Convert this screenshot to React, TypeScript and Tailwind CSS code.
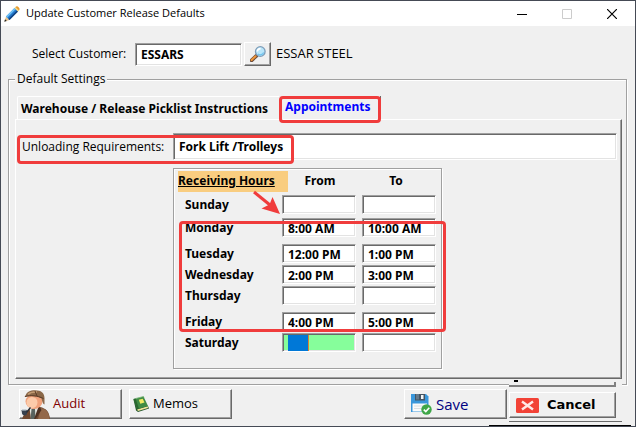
import { useState } from 'react'
import clsx from 'clsx'

const sunken =
  'border border-t-[#a0a0a0] border-l-[#a0a0a0] border-b-white border-r-white shadow-[inset_1px_1px_0_#696969,inset_-1px_-1px_0_#e3e3e3] outline-none'
const raised =
  'border border-t-white border-l-white border-b-[#696969] border-r-[#696969] shadow-[inset_-1px_-1px_0_#a0a0a0] bg-[#f0f0f0]'
const groupBox =
  'border border-[#a0a0a0] shadow-[inset_1px_1px_0_#ffffff,1px_1px_0_#ffffff]'
const bold = "font-['Noto_Sans',sans-serif] font-bold"
const callout = 'absolute pointer-events-none rounded-[4px] border-3 border-[#f03c3c]'

const hours = [
  { day: 'Sunday', from: '', to: '', row: 'h-[23px]' },
  { day: 'Monday', from: '8:00 AM', to: '10:00 AM', row: 'h-[26px]' },
  { day: 'Tuesday', from: '12:00 PM', to: '1:00 PM', row: 'h-[21px]' },
  { day: 'Wednesday', from: '2:00 PM', to: '3:00 PM', row: 'h-[21px]' },
  { day: 'Thursday', from: '', to: '', row: 'h-[26px]' },
  { day: 'Friday', from: '4:00 PM', to: '5:00 PM', row: 'h-[21px]' },
  { day: 'Saturday', from: '', to: '', row: 'h-[21px]' },
]

function PencilIcon() {
  return (
    <svg className="w-4 h-4" viewBox="0 0 16 16" aria-hidden="true">
      <path d="M0.5 15.5 2 10.5 5.5 14Z" fill="#e9c48c" />
      <path d="M0.3 15.7 1 13.2 2.8 15Z" fill="#222" />
      <path d="M2 10.5 10.5 2 14 5.5 5.5 14Z" fill="#2277cc" />
      <path d="M2 10.5 10.5 2 11.7 3.2 3.2 11.7Z" fill="#6cc0f5" />
      <path d="M4.4 12.9 12.9 4.4 14 5.5 5.5 14Z" fill="#12427f" />
      <path d="M10.5 2 11.4 1.1 14.9 4.6 14 5.5Z" fill="#f2d377" />
      <path d="M11.4 1.1C12.4 0 13.5 0 14.6 1.2 15.9 2.4 15.9 3.6 14.9 4.6Z" fill="#e69a2c" />
    </svg>
  )
}

function SearchIcon() {
  return (
    <svg className="w-4 h-4" viewBox="0 0 16 16" aria-hidden="true">
      <path d="M1.6 14.4 6.6 9.6" stroke="#6b4b3a" strokeWidth="3.6" strokeLinecap="round" />
      <path d="M1.6 14 5.6 10.2" stroke="#f0973a" strokeWidth="2" strokeLinecap="round" />
      <circle cx="10.3" cy="5.5" r="4.8" fill="#b9e6fa" stroke="#7d9cb8" strokeWidth="1.3" />
      <path d="M7.3 5.5C7.5 3.6 8.8 2.6 10.6 2.6" stroke="#fff" strokeWidth="1.6" fill="none" />
      <path d="M8 8.1C10 9.6 12.6 8.7 13.6 6.4" stroke="#6fc3ee" strokeWidth="1.2" fill="none" />
    </svg>
  )
}

function DetectiveIcon() {
  return (
    <svg className="w-[30px] h-[29px] shrink-0" viewBox="0 0 30 29" aria-hidden="true">
      {/* coat, shirt and tie */}
      <path d="M2 29C3 25 6 22 9 19L13 17H20C26 18.500 29 21 30 29Z" fill="#70482f" />
      <path d="M21 18C26 19 29 22 29.500 29H18Z" fill="#93684a" />
      <path d="M9.500 17.500 18 16.500 18.500 21 14 29H11Z" fill="#e6e8e2" />
      <path d="M11.500 19 15 18.500 15.500 29H10.500Z" fill="#59635f" />
      <path d="M19 16.500 21.500 20 15.500 29H14L17.500 19.500Z" fill="#4d3122" />
      {/* face */}
      <ellipse cx="14" cy="11.500" rx="8.500" ry="7.500" fill="#f0a27c" />
      <ellipse cx="12" cy="12.500" rx="5.500" ry="5.500" fill="#fccbaa" />
      {/* deerstalker */}
      <path d="M5.500 5.500C7 1.800 10 0.300 15 0.300 21 0.300 24.500 3 24.500 8V14.500C23 14.500 22.500 12 21.500 8.500 16 5.800 11 5.500 4.500 7Z" fill="#8a6748" />
      <path d="M8 4.500C10 2.300 13 1.700 17 2" stroke="#c39b72" strokeWidth="1.500" fill="none" />
      <path d="M15 1 17 6M5 6.500C11 5 17 5.500 23.500 8.500" stroke="#5a3b26" strokeWidth="1" fill="none" />
      {/* pipe */}
      <path d="M1.500 20H7V23.500C7 26 2.500 26 2 23.500Z" fill="#38424f" />
      <path d="M2 20H6.500" stroke="#b3bec8" strokeWidth="1.300" />
      <path d="M6.500 22.500 10.500 17.500" stroke="#28303a" strokeWidth="1.300" />
    </svg>
  )
}

function BookIcon() {
  return (
    <svg className="w-4 h-4 shrink-0" viewBox="0 0 16 16" aria-hidden="true">
      <path d="M0.500 3.500 3 14.500 5 16 16 12.500 15 10Z" fill="#24572b" />
      <path d="M4 13.500 14.800 10.200 15 12 5 15Z" fill="#f2e39b" />
      <path d="M0.500 3 10.500 0.500 15 10 4 13.300Z" fill="#3f8b43" />
      <path d="M0.500 3 2.600 2.500 6 12.700 4 13.300Z" fill="#2a672f" />
      <path d="M5.800 3.700 9.700 2.700 11.500 6.500 7.300 7.700Z" fill="#f2ea62" />
      <path d="M3 2.400 10.500 0.500 11 1.600" stroke="#80bb7c" strokeWidth="0.800" fill="none" />
    </svg>
  )
}

function SaveIcon() {
  return (
    <svg className="w-[22px] h-[22px] shrink-0" viewBox="0 0 22 22" aria-hidden="true">
      <path d="M1 1H16L18.500 3.500V19H1Z" fill="#3a97db" />
      <path d="M5 1H15V7.500H5Z" fill="#455463" />
      <path d="M6 1H9V6.500H6Z" fill="#64798a" />
      <path d="M11 2H13.500V6H11Z" fill="#f1f5f7" />
      <path d="M2.500 10.500H17V18.500H2.500Z" fill="#fafafa" />
      <path d="M4 13H15M4 15.500H12" stroke="#d2d8dc" strokeWidth="0.800" />
      <circle cx="16.500" cy="16.500" r="5.200" fill="#3fa648" />
      <path d="M13.800 16.600 15.800 18.600 19.300 14.800" stroke="#fff" strokeWidth="1.600" fill="none" />
    </svg>
  )
}

function CancelIcon() {
  return (
    <svg className="w-[23px] h-[15px] shrink-0" viewBox="0 0 23 15" aria-hidden="true">
      <rect width="23" height="15" rx="1.500" fill="#f24236" />
      <path d="M6 3.500 17 11.500M17 3.500 6 11.500" stroke="#ffe9e7" strokeWidth="2.400" />
    </svg>
  )
}

function TitleBar() {
  return (
    <header className="flex h-[25px] items-center bg-white pl-[3px] text-[11px]">
      <PencilIcon />
      <h1 className="ml-1.5 grow">Update Customer Release Defaults</h1>
      <button type="button" aria-label="Minimize" className="flex w-[45px] justify-center">
        <svg className="w-2.5 h-2.5" viewBox="0 0 10 10"><path d="M0 5.500H10" stroke="#000" /></svg>
      </button>
      <button type="button" aria-label="Maximize" disabled className="flex w-[45px] justify-center">
        <svg className="w-2.5 h-2.5" viewBox="0 0 10 10"><path d="M0.500 0.500H9.500V9.500H0.500Z" stroke="#ccc" fill="none" /></svg>
      </button>
      <button type="button" aria-label="Close" className="flex w-[46px] justify-center">
        <svg className="w-2.5 h-2.5" viewBox="0 0 10 10"><path d="M0 0 10 10M10 0 0 10" stroke="#000" strokeWidth="1.200" /></svg>
      </button>
    </header>
  )
}

function HoursTable() {
  const time = clsx(sunken, bold, 'block h-[19px] w-[74px] pt-0.5 pl-[5px]')

  return (
    <div className={clsx(groupBox, 'relative mt-2 ml-[157px] w-[269px] pt-0.5 pb-[14px] pl-1')}>
      <table className={clsx(bold, 'w-[264px] table-fixed border-collapse text-left')}>
        <thead>
          <tr className="h-6 align-top">
            <th className="w-[104px] p-0">
              <div className="h-[21px] w-[110px] bg-[#f9cd80] leading-[19px] underline">Receiving Hours</div>
            </th>
            <th className="w-20 p-0 pr-1 text-center leading-[19px]">From</th>
            <th className="w-20 p-0 pr-3 text-center leading-[19px]">To</th>
          </tr>
        </thead>
        <tbody>
          {hours.map(({ day, from, to, row }) => (
            <tr key={day} className={clsx(row, 'align-top')}>
              <th scope="row" className="p-0 pl-[7px] leading-[20px]">{day}</th>
              <td className="p-0">
                <div className="relative">
                  <input
                    aria-label={`${day} from`}
                    defaultValue={from}
                    className={clsx(time, day === 'Saturday' ? 'bg-[#86fe9b]' : 'bg-white')}
                  />
                  {/* active cell: selection block and caret */}
                  {day === 'Saturday' && (
                    <span className="absolute top-0.5 left-1.5 h-4 w-[21px] border-r border-[#e08030] bg-[#0078d7]" />
                  )}
                </div>
              </td>
              <td className="p-0">
                <input aria-label={`${day} to`} defaultValue={to} className={clsx(time, 'bg-white')} />
              </td>
            </tr>
          ))}
        </tbody>
      </table>

      <div className={clsx(callout, 'top-[52px] left-[5px] h-[111px] w-[267px]')} />
      <svg className="absolute top-[21px] left-[78px] h-7 w-8 pointer-events-none" viewBox="0 0 32 28" aria-hidden="true">
        <path d="M2 2 18 15" stroke="#f03c3c" strokeWidth="3" />
        <path d="M28 24 20.500 7 17.500 14.500 9.500 18.500Z" fill="#f03c3c" />
      </svg>
    </div>
  )
}

export default function App() {
  const [tab, setTab] = useState('appointments')

  return (
    <div className="relative min-h-screen w-full overflow-hidden border border-[#454a55] bg-[#f0f0f0] font-['Open_Sans','Noto_Sans',sans-serif] text-[12px] text-black">
      <TitleBar />

      <main>
        <div className="flex h-10 items-center pt-4 pl-[31px]">
          <label htmlFor="customer" className="w-[103px]">Select Customer:</label>
          <input
            id="customer"
            defaultValue="ESSARS"
            className={clsx(sunken, bold, 'h-[23px] w-[107px] bg-white pl-[5px]')}
          />
          <button type="button" aria-label="Find customer" className={clsx(raised, 'ml-0.5 flex h-6 w-[27px] items-center justify-center')}>
            <SearchIcon />
          </button>
          <span className="ml-[5px] text-[13px]">ESSAR STEEL</span>
        </div>

        <fieldset className={clsx(groupBox, 'mt-[5px] mr-2 ml-[7px] pr-1 pb-[5px] pl-1.5')}>
          <legend className="bg-[#f0f0f0] px-0.5 leading-4">Default Settings</legend>

          <div role="tablist" className="flex h-8 items-start pt-[9px] pl-0.5">
            <button
              type="button"
              role="tab"
              aria-selected={tab === 'warehouse'}
              onClick={() => setTab('warehouse')}
              className={clsx(bold, 'h-[23px] w-[262px] rounded-tl-[2px] border-t border-l border-white pt-0.5 pl-[3px] text-left whitespace-nowrap')}
            >
              Warehouse / Release Picklist Instructions
            </button>
            <div className="relative">
              <button
                type="button"
                role="tab"
                aria-selected={tab === 'appointments'}
                onClick={() => setTab('appointments')}
                className={clsx(bold, 'h-[23px] w-[102px] border-r border-[#696969] pb-0.5 pl-1.5 text-left text-[#0000ff]')}
              >
                Appointments
              </button>
              <div className={clsx(callout, 'top-0 left-0 h-[27px] w-[102px]')} />
            </div>
          </div>

          <section className="border border-t-white border-r-[#696969] border-b-[#696969] border-l-white pt-[13px] pr-1 pb-[9px] shadow-[inset_-1px_-1px_0_#a0a0a0]">
            <div className="relative flex items-center pl-1.5">
              <label htmlFor="unloading" className="w-[151px] whitespace-nowrap">Unloading Requirements:</label>
              <input
                id="unloading"
                defaultValue="Fork Lift /Trolleys"
                className={clsx(sunken, bold, 'h-[27px] min-w-0 grow bg-white pl-[5px]')}
              />
              <div className={clsx(callout, 'top-0.5 left-px h-[29px] w-[277px]')} />
            </div>
            <HoursTable />
          </section>
        </fieldset>

        <footer className="flex gap-[7px] pt-1 pr-[19px] pb-[7px] pl-[18px] text-[13px]">
          <button type="button" className={clsx(raised, 'flex h-[30px] w-[103px] items-center gap-[3px] text-[#800000]')}>
            <DetectiveIcon />
            Audit
          </button>
          <button type="button" className={clsx(raised, 'flex h-[30px] w-[103px] items-center gap-1 pl-[3px]')}>
            <BookIcon />
            Memos
          </button>
          <div className="ml-auto flex gap-0.5">
            <button type="button" className={clsx(raised, 'flex h-[30px] w-[103px] items-center gap-1 pl-[5px] text-[15px] text-[#000080]')}>
              <SaveIcon />
              Save
            </button>
            <div className="relative pt-[3px]">
              {/* edges of the panel behind the cancel button */}
              <div className="absolute -top-[9px] left-0 h-[7px] w-[113px] bg-[#f0f0f0]" />
              <div className="absolute -top-[9px] left-[5px] h-0.5 w-1 bg-black" />
              <div className="absolute -top-[7px] left-0 h-[5px] w-[107px] border-r-2 border-b-2 border-[#808080]" />
              <button
                type="button"
                className={clsx(raised, "relative flex h-[26px] w-[107px] items-center gap-2 pl-1.5 font-['DejaVu_Sans',sans-serif] text-[13px] font-bold")}
              >
                <CancelIcon />
                Cancel
              </button>
              <div className="absolute top-8 left-0 h-px w-[113px] bg-[#696969]" />
            </div>
          </div>
        </footer>
      </main>
      <div className="absolute right-1 -bottom-px h-0.5 w-[142px] bg-black" />
    </div>
  )
}
